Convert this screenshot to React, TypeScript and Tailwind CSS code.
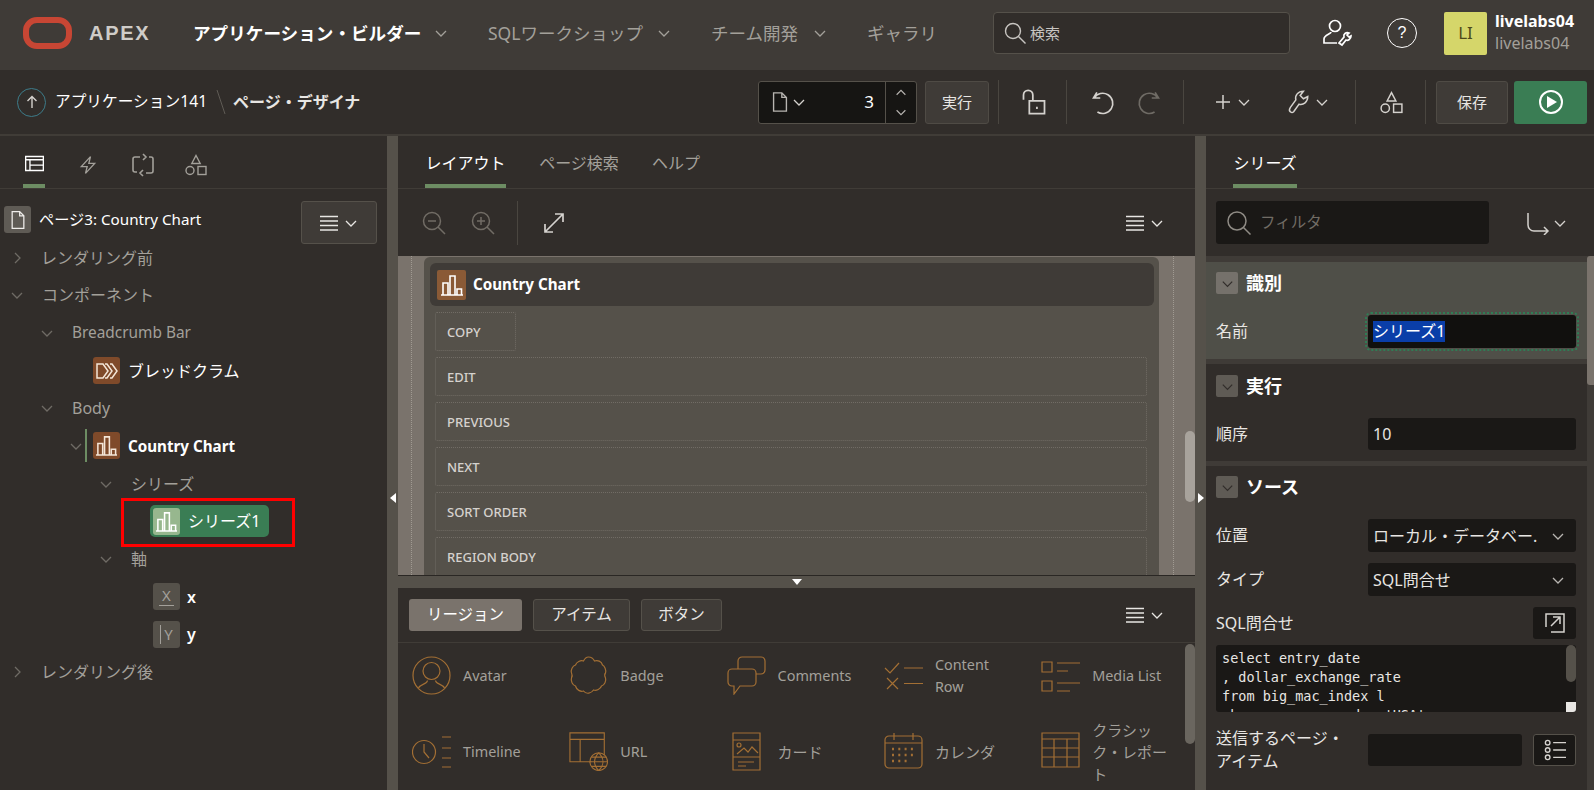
import type { ReactNode } from 'react'

const FONT = "font-['Noto_Sans','Noto_Sans_CJK_JP',sans-serif]"

function Chevron({ className = '', dir = 'down' }: { className?: string; dir?: 'down' | 'right' | 'up' }) {
  const d = dir === 'down' ? 'M3 6l5 5 5-5' : dir === 'up' ? 'M3 10l5-5 5 5' : 'M6 3l5 5-5 5'
  return (
    <svg viewBox="0 0 16 16" fill="none" stroke="currentColor" strokeWidth="1.3" className={`w-4 h-4 shrink-0 ${className}`}>
      <path d={d} />
    </svg>
  )
}

function Icon({ children, className = '', size = 24, stroke = 1.4 }: { children: ReactNode; className?: string; size?: number; stroke?: number }) {
  return (
    <svg viewBox={`0 0 ${size} ${size}`} fill="none" stroke="currentColor" strokeWidth={stroke} className={`shrink-0 ${className}`}>
      {children}
    </svg>
  )
}

const Shapes = ({ className = '' }: { className?: string }) => (
  <Icon className={className}>
    <path d="M12 2.5l4.2 8h-8.4z" />
    <circle cx="6" cy="17.5" r="4" />
    <rect x="14" y="13.5" width="8" height="8" />
  </Icon>
)

const MenuLines = ({ className = '' }: { className?: string }) => (
  <svg viewBox="0 0 18 16" className={`w-[18px] h-4 ${className}`} fill="none" stroke="currentColor" strokeWidth="1.6">
    <path d="M0 1.5h18M0 6h18M0 10.5h18M0 15h18" />
  </svg>
)

const BarChart = ({ className = '' }: { className?: string }) => (
  <Icon className={className} stroke={1.6}>
    <path d="M1 22h22M3 22V10h5v12M10 22V3h5v19M17 22v-6h4.500v6" />
  </Icon>
)

function MenuButton({ className = '' }: { className?: string }) {
  return (
    <div className={`flex items-center gap-[5px] text-[#e8e6e3] ${className}`}>
      <MenuLines />
      <Chevron />
    </div>
  )
}

function Divider({ className = '' }: { className?: string }) {
  return <div className={`w-px h-[44px] bg-[#4a4640] shrink-0 ${className}`} />
}

function TopNav() {
  return (
    <header className="h-[70px] pb-[4px] bg-[#3f3b37] flex items-center shrink-0">
      <div className="w-[49px] h-[32px] ml-[23px] rounded-[14px] border-[6px] border-[#c74634] shrink-0" />
      <span className="ml-[17px] w-[104px] text-[20px] font-semibold tracking-[1.7px] text-[#cfccc8] font-['Liberation_Sans',sans-serif]">APEX</span>
      <span className="w-[228px] text-[17.6px] font-bold text-white whitespace-nowrap">アプリケーション・ビルダー</span>
      <Chevron className="ml-[12px] text-[#a3a09a]" />
      <span className="ml-[39px] text-[17.5px] text-[#a3a09a] whitespace-nowrap w-[156px]">SQLワークショップ</span>
      <Chevron className="ml-[12px] text-[#a3a09a]" />
      <span className="ml-[39px] text-[17.5px] text-[#a3a09a] whitespace-nowrap w-[89px]">チーム開発</span>
      <Chevron className="ml-[12px] text-[#a3a09a]" />
      <span className="ml-[39px] text-[17.5px] text-[#a3a09a] whitespace-nowrap w-[72px]">ギャラリ</span>
      <div className="ml-[54px] w-[297px] h-[42px] bg-[#312d2a] border border-[#55514a] rounded-[4px] flex items-center pl-[9px] gap-[3px] text-[#c8c5c1]">
        <Icon className="w-6 h-6"><circle cx="10" cy="10" r="7.5" /><path d="M15.5 15.5l7 7" /></Icon>
        <span className="text-[15px]">検索</span>
      </div>
      <Icon className="ml-[32px] w-[30px] h-[30px] text-white" size={30} stroke={1.7}>
        <circle cx="13" cy="8" r="5.5" />
        <path d="M9 14c0 2-7 3-7 7v4h13M17 25l5-6c-1-3 2-5 5-4l-2 2 2 2 2-1c0 3-3 5-5 4l-4 5z" />
      </Icon>
      <div className="ml-[35px] w-[30px] h-[30px] rounded-full border-[1.7px] border-white flex items-center justify-center text-white text-[16px] font-['Liberation_Sans',sans-serif]">?</div>
      <div className="ml-[27px] w-[43px] h-[43px] rounded-[2px] bg-[#d5d66a] flex items-center justify-center text-[#4d4a1a] text-[17px]">LI</div>
      <div className="ml-[8px] mb-[3px] flex flex-col leading-[22px]">
        <span className="text-[16px] font-bold text-white">livelabs04</span>
        <span className="text-[16px] text-[#a3a09a]">livelabs04</span>
      </div>
    </header>
  )
}

function ToolButton({ children, className = '' }: { children: ReactNode; className?: string }) {
  return (
    <div className={`h-[43px] bg-[#3f3b37] border border-[#4f4b45] rounded-[3px] flex items-center justify-center text-[15px] text-[#e8e6e3] shrink-0 ${className}`}>
      {children}
    </div>
  )
}

function Toolbar() {
  return (
    <div className="h-[66px] bg-[#312d2a] border-b-2 border-[#403c37] flex items-center shrink-0 text-[#d5d2ce]">
      <div className="ml-[17px] w-[29px] h-[29px] rounded-full border border-[#3d7c8a] flex items-center justify-center">
        <Icon className="w-4 h-4" size={16}><path d="M8 14V2.5M3.5 7L8 2.5 12.5 7" /></Icon>
      </div>
      <span className="ml-[9px] w-[153px] text-[15.7px] text-white whitespace-nowrap">アプリケーション141</span>
      <span className="w-[25px] flex justify-center">
        <svg viewBox="0 0 10 26" className="w-[10px] h-[26px]" fill="none" stroke="#5f5b55"><path d="M1 1l8 24" /></svg>
      </span>
      <span className="w-[525px] text-[16px] font-bold text-[#e8e6e3] whitespace-nowrap">ページ・デザイナ</span>
      <div className="w-[159px] h-[43px] bg-[#161513] border border-[#55514a] rounded-[3px] flex items-center shrink-0">
        <Icon className="ml-[10px] w-[22px] h-[26px] text-[#b8b5b1]" stroke={1.5}><path d="M5 2h9l5 5v15H5zM14 2v5h5" /></Icon>
        <Chevron className="text-[#d5d2ce]" />
        <span className="ml-auto mr-[11px] text-[17px] text-white">3</span>
        <div className="w-[31px] h-full border-l border-[#55514a] flex flex-col items-center justify-center gap-[5px] text-[#b8b5b1]">
          <Chevron dir="up" className="w-[14px] h-[14px]" />
          <Chevron className="w-[14px] h-[14px]" />
        </div>
      </div>
      <ToolButton className="ml-[8px] w-[64px]">実行</ToolButton>
      <Divider className="ml-[9px]" />
      <Icon className="ml-[21px] w-[28px] h-[30px]" stroke={1.5}>
        <path d="M3 10V6a4 4 0 0 1 8 0v5M8 11h13v11H8z" /><path d="M14.5 16v2" />
      </Icon>
      <Divider className="ml-[18px]" />
      <Icon className="ml-[22px] w-[27px] h-[27px]" stroke={1.5}>
        <path d="M7 3l-3 5h6M4.500 8a9 9 0 1 1 3 12.500" />
      </Icon>
      <Icon className="ml-[20px] w-[27px] h-[27px] text-[#6f6b65]" stroke={1.5}>
        <path d="M17 3l3 5h-6M19.500 8a9 9 0 1 0-3 12.500" />
      </Icon>
      <Divider className="ml-[20px]" />
      <Icon className="ml-[30px] w-[18px] h-[18px]" size={18} stroke={1.5}><path d="M9 2v14M2 9h14" /></Icon>
      <Chevron className="ml-[4px]" />
      <Icon className="ml-[33px] w-[26px] h-[30px]" stroke={1.4}>
        <path d="M5 21c-1.500-1-1-2.500 0-4l5-7c-1-4 2-8 7-8l-3 4 3 3 4-2c0 5-4 8-8 7l-5 7c-1 1-2 1-3 0z" />
      </Icon>
      <Chevron className="ml-[3px]" />
      <Divider className="ml-[25px]" />
      <Shapes className="ml-[23px] w-[25px] h-[25px]" />
      <Divider className="ml-[21px]" />
      <ToolButton className="ml-[10px] w-[72px]">保存</ToolButton>
      <div className="ml-[6px] w-[73px] h-[43px] bg-[#3a7d54] rounded-[3px] flex items-center justify-center shrink-0">
        <div className="w-[24px] h-[24px] rounded-full border-2 border-white flex items-center justify-center">
          <svg viewBox="0 0 10 12" className="w-[10px] h-[12px] ml-[2px]" fill="white"><path d="M0 0l10 6-10 6z" /></svg>
        </div>
      </div>
    </div>
  )
}

function Tab({ label, active = false, className = '' }: { label: string; active?: boolean; className?: string }) {
  return (
    <div className={`h-full pt-[6px] flex items-center justify-center border-b-4 text-[16px] whitespace-nowrap ${active ? 'border-[#6d8d63] text-white' : 'border-transparent text-[#a3a09a]'} ${className}`}>
      {label}
    </div>
  )
}

function TreeRow({ children, className = '' }: { children: ReactNode; className?: string }) {
  return <div className={`h-[37.7px] flex items-center text-[16px] whitespace-nowrap ${className}`}>{children}</div>
}

function NodeIcon({ children, className = 'bg-[#7f4a2a]' }: { children: ReactNode; className?: string }) {
  return <div className={`w-[27px] h-[27px] rounded-[3px] flex items-center justify-center shrink-0 ${className}`}>{children}</div>
}

function LeftPanel() {
  return (
    <aside className="w-[387px] h-full bg-[#312d2a] flex flex-col shrink-0">
      <div className="h-[53px] border-b border-[#403c37] flex shrink-0 text-[#a3a09a]">
        <div className="ml-[23px] w-[22px] h-full pt-[6px] border-b-4 border-[#6d8d63] flex items-center justify-center text-white">
          <Icon className="w-[23px] h-[19px]" size={23} stroke={1.6}><path d="M0.800 3h21.400v17H0.800zM0.800 7h21.400M6 7v13M6 13.500h16" /></Icon>
        </div>
        <div className="flex items-center pt-[6px]">
          <Icon className="ml-[33px] w-[20px] h-[24px]" stroke={1.6}><path d="M15 2L4 14h7l-2 8 11-12h-7z" /></Icon>
          <Icon className="ml-[33px] w-[24px] h-[24px]" stroke={1.6}><path d="M9 4H4a2 2 0 0 0-2 2v11a2 2 0 0 0 2 2h2M15 20h5a2 2 0 0 0 2-2V6a2 2 0 0 0-2-2h-2M12 1l3 3-3 3M12 17l-3 3 3 3" /></Icon>
          <Shapes className="ml-[29px] w-[24px] h-[24px]" />
        </div>
      </div>
      <div className="relative pt-[12px] flex-1">
        <div className="absolute right-[10px] top-[12px] w-[76px] h-[43px] bg-[#3f3b37] border border-[#55514a] rounded-[3px] flex items-center justify-center">
          <MenuButton />
        </div>
        <TreeRow className="pl-[4px] text-white">
          <NodeIcon className="bg-[#5f5b55]">
            <Icon className="w-[20px] h-[22px] text-[#f0eeeb]" stroke={1.5}><path d="M5 2h9l5 5v15H5zM14 2v5h5" /></Icon>
          </NodeIcon>
          <span className="ml-[8px] text-[15.2px]">ページ3: Country Chart</span>
        </TreeRow>
        <TreeRow className="pl-[9px] text-[#a3a09a]">
          <Chevron dir="right" className="text-[#6f6b65]" />
          <span className="ml-[16px]">レンダリング前</span>
        </TreeRow>
        <TreeRow className="pl-[9px] text-[#a3a09a]">
          <Chevron className="text-[#6f6b65]" />
          <span className="ml-[17px]">コンポーネント</span>
        </TreeRow>
        <TreeRow className="pl-[39px] text-[#a3a09a]">
          <Chevron className="text-[#6f6b65]" />
          <span className="ml-[17px] text-[15.4px]">Breadcrumb Bar</span>
        </TreeRow>
        <TreeRow className="pl-[93px] text-white">
          <NodeIcon>
            <Icon className="w-[24px] h-[24px] text-[#f4e6d8]" stroke={1.5}>
              <path d="M2 5h6l5 7-5 7H2V5zM10 5h2l5 7-5 7h-2M15 5h2l5 7-5 7h-2" />
            </Icon>
          </NodeIcon>
          <span className="ml-[8px]">ブレッドクラム</span>
        </TreeRow>
        <TreeRow className="pl-[39px] text-[#a3a09a]">
          <Chevron className="text-[#6f6b65]" />
          <span className="ml-[17px]">Body</span>
        </TreeRow>
        <TreeRow className="pl-[68px] text-white">
          <Chevron className="text-[#6f6b65]" />
          <div className="ml-[1px] w-[2px] h-[33px] bg-[#6d8d63]" />
          <NodeIcon className="ml-[6px] bg-[#7f4a2a]">
            <BarChart className="w-[23px] h-[23px] text-[#f4e6d8]" />
          </NodeIcon>
          <span className="ml-[8px] font-bold text-[15.2px]">Country Chart</span>
        </TreeRow>
        <TreeRow className="pl-[98px] text-[#a3a09a]">
          <Chevron className="text-[#6f6b65]" />
          <span className="ml-[17px]">シリーズ</span>
        </TreeRow>
        <TreeRow className="relative pl-[150px] text-white">
          <div className="w-[119px] h-[32px] rounded-[5px] bg-[#3a7d54] flex items-center pl-[3px]">
            <NodeIcon className="bg-[#97b78e]">
              <BarChart className="w-[23px] h-[23px] text-white" />
            </NodeIcon>
            <span className="ml-[8px]">シリーズ1</span>
          </div>
          <div className="absolute left-[121px] top-[-5px] w-[174px] h-[49px] border-[3px] border-[#ff0000]" />
        </TreeRow>
        <TreeRow className="pl-[98px] text-[#a3a09a]">
          <Chevron className="text-[#6f6b65]" />
          <span className="ml-[17px]">軸</span>
        </TreeRow>
        <TreeRow className="pl-[153px] text-white">
          <NodeIcon className="bg-[#55514a]">
            <span className="text-[#a3a09a] text-[15px] leading-none border-b border-[#a3a09a] px-[3px] pb-[2px]">X</span>
          </NodeIcon>
          <span className="ml-[7px] font-semibold">x</span>
        </TreeRow>
        <TreeRow className="pl-[153px] text-white">
          <NodeIcon className="bg-[#55514a]">
            <span className="text-[#a3a09a] text-[15px] leading-none border-l border-[#a3a09a] pl-[3px] py-[2px]">Y</span>
          </NodeIcon>
          <span className="ml-[7px] font-semibold">y</span>
        </TreeRow>
        <TreeRow className="pl-[9px] text-[#a3a09a]">
          <Chevron dir="right" className="text-[#6f6b65]" />
          <span className="ml-[16px]">レンダリング後</span>
        </TreeRow>
      </div>
    </aside>
  )
}

function Gutter({ side }: { side: 'left' | 'right' }) {
  return (
    <div className="w-[11px] h-full bg-[#55514a] flex justify-center pt-[357px] shrink-0">
      <svg viewBox="0 0 6 10" className="w-[6px] h-[10px]" fill="white">
        <path d={side === 'left' ? 'M6 0v10L0 5z' : 'M0 0v10l6-5z'} />
      </svg>
    </div>
  )
}

const canvasButtons = ['COPY', 'EDIT', 'PREVIOUS', 'NEXT', 'SORT ORDER', 'REGION BODY']

function Canvas() {
  return (
    <div className="relative h-[320px] bg-[#7a736c] flex overflow-hidden shrink-0 border-b border-[#2a2724]">
      <div className="w-[26px] shrink-0 flex justify-center">
        <div className="w-px h-full border-l border-dotted border-[#a09a92]" />
      </div>
      <div className="w-[735px] shrink-0 bg-[#55514a] rounded-t-[6px] pt-[6px] pl-[6px] pr-[5px] mt-[1px]">
        <div className="h-[43px] bg-[#3f3b37] rounded-[6px] flex items-center pl-[7px]">
          <div className="w-[29px] h-[30px] rounded-[2px] bg-[#8a5a36] flex items-center justify-center">
            <BarChart className="w-[24px] h-[24px] text-white" />
          </div>
          <span className="ml-[7px] text-[15.200px] font-bold text-white">Country Chart</span>
        </div>
        <div className="pl-[5px] pr-[7px] pt-[6px] flex flex-col gap-[6px]">
          {canvasButtons.map((b) => (
            <div key={b} className={`h-[39px] pt-[2px] shrink-0 border border-dotted border-[#716c65] rounded-[2px] flex items-center pl-[11px] text-[13px] font-medium text-[#d5d2ce] ${b === 'COPY' ? 'w-[81px]' : ''}`}>
              {b}
            </div>
          ))}
        </div>
      </div>
      <div className="flex-1 flex justify-center">
        <div className="w-px h-full ml-[-8px] border-l border-dotted border-[#a09a92]" />
      </div>
      <div className="absolute right-0 top-[175px] w-[10px] h-[71px] rounded-[5px] bg-[#a8a39c]" />
    </div>
  )
}

type GalleryEntry = { label: string; icon: ReactNode }

const gi = 'w-[39px] h-[39px] text-[#a36f34]'

const gallery: GalleryEntry[] = [
  {
    label: 'Avatar',
    icon: (
      <Icon className={gi} size={39} stroke={1.2}>
        <circle cx="19.500" cy="19.500" r="18.500" />
        <circle cx="19.500" cy="15" r="8.500" />
        <path d="M6.500 32c2-4 9-4 9-7.500M32.500 32c-2-4-9-4-9-7.500" />
      </Icon>
    ),
  },
  {
    label: 'Badge',
    icon: (
      <Icon className={gi} size={39} stroke={1.2}>
        <path d="M19.500 1c3 0 5 2 6 4 3-1 7 0 8 4 2 1 4 5 3 8-1 1-1 3 0 5 1 3-1 7-4 8-1 3-5 5-8 4-2 3-7 5-10 1-3 1-7-1-8-5-3-1-5-5-4-8 1-2 1-3 0-5-1-3 1-7 4-8 1-3 5-5 8-4 1-2 3-4 5-4z" />
      </Icon>
    ),
  },
  {
    label: 'Comments',
    icon: (
      <Icon className={gi} size={39} stroke={1.2}>
        <path d="M11 13V5a4 4 0 0 1 4-4h19a4 4 0 0 1 4 4v9a4 4 0 0 1-4 4h-5" />
        <path d="M5 13h20a4 4 0 0 1 4 4v9a4 4 0 0 1-4 4H13l-6 8v-8H5a4 4 0 0 1-4-4v-9a4 4 0 0 1 4-4z" />
      </Icon>
    ),
  },
  {
    label: 'Content Row',
    icon: (
      <Icon className={gi} size={39} stroke={1.2}>
        <path d="M1 12l5 5 9-10M20 12h19M3 22l11 11M14 22L3 33M20 27.500h19" />
      </Icon>
    ),
  },
  {
    label: 'Media List',
    icon: (
      <Icon className={gi} size={39} stroke={1.2}>
        <path d="M1 6h10v10H1zM1 25h10v10H1zM16 7h23M16 15h11M16 27h23M16 35h13" />
      </Icon>
    ),
  },
  {
    label: 'Timeline',
    icon: (
      <Icon className={gi} size={39} stroke={1.2}>
        <circle cx="12" cy="20" r="11.500" />
        <path d="M12 12v8l5 6M30 5h9M30 16h9M30 26h9M30 35h9" />
      </Icon>
    ),
  },
  {
    label: 'URL',
    icon: (
      <Icon className={gi} size={42} stroke={1.2}>
        <path d="M24 32H1V1h37v24M1 8h37M12 8v24" />
        <circle cx="32" cy="32" r="9.500" />
        <path d="M22.500 32h19M32 22.500c-6 6-6 13 0 19M32 22.500c6 6 6 13 0 19M24 27h16M24 37h16" />
      </Icon>
    ),
  },
  {
    label: 'カード',
    icon: (
      <Icon className={gi} size={39} stroke={1.2}>
        <path d="M6 1h27v37H6zM6 8h27M6 25h27M11 30h16M11 34h8" />
        <circle cx="12" cy="13" r="2" />
        <path d="M10 22l7-6 4 4 4-5 6 6" />
      </Icon>
    ),
  },
  {
    label: 'カレンダ',
    icon: (
      <Icon className={gi} size={39} stroke={1.2}>
        <rect x="1" y="4" width="37" height="32" rx="4" />
        <path d="M1 11h37M10 1v7M29 1v7" />
        <path strokeWidth="2.400" strokeDasharray="2 4.300" d="M8 17h24M8 23h24M8 29h18" />
      </Icon>
    ),
  },
  {
    label: 'クラシック・レポート',
    icon: (
      <Icon className={gi} size={39} stroke={1.2}>
        <path d="M1 1h37v34H1zM1 7h37M1 16h37M1 25h37M13 7v28M26 7v28" />
      </Icon>
    ),
  },
]

function Gallery() {
  return (
    <div className="relative flex-1 bg-[#312d2a] flex flex-col min-h-0">
      <div className="h-[55px] border-b border-[#403c37] flex items-center pl-[11px] gap-[11px] shrink-0 text-[15.5px]">
        <div className="w-[113px] h-[32px] rounded-[3px] bg-[#7a736c] flex items-center justify-center text-white">リージョン</div>
        <div className="w-[97px] h-[32px] rounded-[3px] bg-[#3f3b37] border border-[#55514a] flex items-center justify-center text-[#e8e6e3]">アイテム</div>
        <div className="w-[81px] h-[32px] rounded-[3px] bg-[#3f3b37] border border-[#55514a] flex items-center justify-center text-[#e8e6e3]">ボタン</div>
        <MenuButton className="ml-auto mr-[30px]" />
      </div>
      <div className="grid grid-cols-[repeat(5,157.3px)] auto-rows-[76px] pl-[14px] pt-[13px]">
        {gallery.map((g) => (
          <div key={g.label} className="h-[39px] flex items-center">
            {g.icon}
            <span className={`ml-[12px] leading-[22px] text-[#a3a09a] ${/^[A-Z]/.test(g.label) ? 'text-[14.4px]' : 'text-[15px]'} ${g.label === 'Content Row' || g.label === 'クラシック・レポート' ? 'w-[78px]' : 'whitespace-nowrap'}`}>
              {g.label}
            </span>
          </div>
        ))}
      </div>
      <div className="absolute right-0 top-[56px] w-[10px] h-[100px] rounded-[5px] bg-[#6a665f]" />
    </div>
  )
}

function MiddlePanel() {
  return (
    <main className="w-[797px] h-full flex flex-col shrink-0 bg-[#312d2a]">
      <div className="h-[53px] border-b border-[#403c37] flex shrink-0">
        <Tab label="レイアウト" active className="ml-[27px] w-[81px]" />
        <Tab label="ページ検索" className="ml-[32px] w-[82px]" />
        <Tab label="ヘルプ" className="ml-[32px] w-[48px]" />
      </div>
      <div className="h-[67px] flex items-center shrink-0">
        <Icon className="ml-[24px] w-[24px] h-[24px] text-[#716c65]" stroke={1.5}>
          <circle cx="10" cy="10" r="8.500" /><path d="M16 16l7 7M6 10h8" />
        </Icon>
        <Icon className="ml-[25px] w-[24px] h-[24px] text-[#716c65]" stroke={1.5}>
          <circle cx="10" cy="10" r="8.500" /><path d="M16 16l7 7M6 10h8M10 6v8" />
        </Icon>
        <Divider className="ml-[22px]" />
        <Icon className="ml-[25px] w-[22px] h-[22px] text-[#d5d2ce]" size={22} stroke={1.7}>
          <path d="M2 20L20 2M12 2h8v8M2 12v8h8" />
        </Icon>
        <MenuButton className="ml-auto mr-[30px]" />
      </div>
      <Canvas />
      <div className="h-[12px] bg-[#55514a] flex justify-center items-center shrink-0">
        <svg viewBox="0 0 10 6" className="w-[10px] h-[6px]" fill="white"><path d="M0 0h10L5 6z" /></svg>
      </div>
      <Gallery />
    </main>
  )
}

function SectionHeader({ title, box = 'bg-[#5f5b55]' }: { title: string; box?: string }) {
  return (
    <div className="flex items-center h-[22px] pl-[10px]">
      <div className={`w-[22px] h-[22px] rounded-[2px] flex items-center justify-center text-[#312d2a] ${box}`}>
        <Chevron className="w-[15px] h-[15px]" />
      </div>
      <span className="ml-[8px] text-[18px] font-bold text-white">{title}</span>
    </div>
  )
}

function Field({ label, children, className = '' }: { label: string; children: ReactNode; className?: string }) {
  return (
    <div className={`flex items-center pl-[10px] pr-[11px] ${className}`}>
      <span className="w-[152px] shrink-0 pr-[20px] text-[16px] leading-[23px] text-[#e8e6e3]">{label}</span>
      {children}
    </div>
  )
}

function SelectBox({ value }: { value: string }) {
  return (
    <div className="w-[208px] h-[33px] rounded-[3px] bg-[#1a1816] flex items-center pl-[5px] text-[16px] text-[#e8e6e3] whitespace-nowrap">
      <span className="w-[165px] overflow-hidden">{value}</span>
      <Chevron className="ml-[12px] text-[#b8b5b1]" />
    </div>
  )
}

function RightPanel() {
  return (
    <aside className="relative w-[388px] h-full flex flex-col shrink-0 bg-[#3f3b37]">
      <div className="h-[53px] bg-[#312d2a] border-b border-[#403c37] flex shrink-0">
        <Tab label="シリーズ" active className="ml-[27px] w-[64px]" />
      </div>
      <div className="h-[67px] bg-[#312d2a] flex items-center shrink-0">
        <div className="ml-[10px] w-[273px] h-[43px] rounded-[3px] bg-[#1a1816] flex items-center pl-[11px] gap-[9px]">
          <Icon className="w-[24px] h-[24px] text-[#8f8b85]" stroke={1.5}><circle cx="10" cy="10" r="9" /><path d="M16.500 16.500l7 7" /></Icon>
          <span className="text-[15.5px] text-[#716c65]">フィルタ</span>
        </div>
        <Icon className="ml-[37px] w-[24px] h-[24px] text-[#d5d2ce]" stroke={1.5}>
          <path d="M2 2v12a6 6 0 0 0 6 6h14M18 16l4 4-4 4" />
        </Icon>
        <Chevron className="ml-[2px] text-[#d5d2ce]" />
      </div>
      <div className="flex-1 pt-[6px] flex flex-col gap-[5px] min-h-0 overflow-hidden pr-[7px]">
        <section className="h-[97px] bg-[#4f4f48] pt-[10px] shrink-0">
          <SectionHeader title="識別" box="bg-[#75716b]" />
          <Field label="名前" className="mt-[21px]">
            <div className="w-[208px] h-[33px] rounded-[3px] bg-[#11100e] outline-2 outline-dotted outline-offset-1 outline-[#2f7d55] flex items-center pl-[5px]">
              <span className="bg-[#0a3ea8] text-white text-[16px] leading-[21px]">シリーズ1</span>
            </div>
          </Field>
        </section>
        <section className="h-[97px] bg-[#312d2a] pt-[11px] shrink-0">
          <SectionHeader title="実行" />
          <Field label="順序" className="mt-[21px]">
            <div className="w-[208px] h-[32px] rounded-[3px] bg-[#1a1816] flex items-center pl-[5px] text-[16px] text-[#e8e6e3]">10</div>
          </Field>
        </section>
        <section className="flex-1 bg-[#312d2a] pt-[10px]">
          <SectionHeader title="ソース" />
          <Field label="位置" className="mt-[21px]">
            <SelectBox value="ローカル・データベー." />
          </Field>
          <Field label="タイプ" className="mt-[11px]">
            <SelectBox value="SQL問合せ" />
          </Field>
          <Field label="SQL問合せ" className="mt-[11px]">
            <div className="ml-auto w-[43px] h-[32px] rounded-[3px] bg-[#1a1816] flex items-center justify-center text-[#d5d2ce]">
              <Icon className="w-[20px] h-[20px]" size={20} stroke={1.5}>
                <path d="M1 14V1h18v18H6M6 13l9-9M8 4h7v7" />
              </Icon>
            </div>
          </Field>
          <div className="relative mt-[6px] ml-[10px] mr-[11px] h-[67px] rounded-[3px] bg-[#1a1816] overflow-hidden pl-[6px] pt-[4px] font-['DejaVu_Sans_Mono',monospace] text-[13.500px] leading-[19px] text-[#e8e6e3] whitespace-pre">
            {"select entry_date\n, dollar_exchange_rate\nfrom big_mac_index l\nwhere currency_cd = 'USA'"}
            <div className="absolute right-0 top-0 w-[10px] h-[37px] rounded-[5px] bg-[#55514a]" />
            <div className="absolute right-0 bottom-0 w-[10px] h-[10px] bg-[#e8e6e3]" />
          </div>
          <Field label="送信するページ・アイテム" className="mt-[15px]">
            <div className="w-[154px] h-[32px] rounded-[3px] bg-[#1a1816]" />
            <div className="ml-[11px] w-[43px] h-[32px] rounded-[3px] bg-[#1a1816] border border-[#55514a] flex items-center justify-center text-[#d5d2ce]">
              <Icon className="w-[24px] h-[22px]" size={24} stroke={1.5}>
                <circle cx="4" cy="4" r="2.500" /><circle cx="4" cy="12" r="2.500" /><circle cx="4" cy="20" r="2.500" />
                <path d="M10 4h14M10 12h14M10 20h14" />
              </Icon>
            </div>
          </Field>
        </section>
      </div>
      <div className="absolute right-0 top-[120px] w-[7px] h-[129px] rounded-l-[3px] bg-[#7a736c]" />
    </aside>
  )
}

export default function App() {
  return (
    <div className={`w-[1594px] h-[790px] flex flex-col overflow-hidden bg-[#312d2a] ${FONT}`}>
      <TopNav />
      <Toolbar />
      <div className="flex flex-1 min-h-0">
        <LeftPanel />
        <Gutter side="left" />
        <MiddlePanel />
        <Gutter side="right" />
        <RightPanel />
      </div>
    </div>
  )
}
